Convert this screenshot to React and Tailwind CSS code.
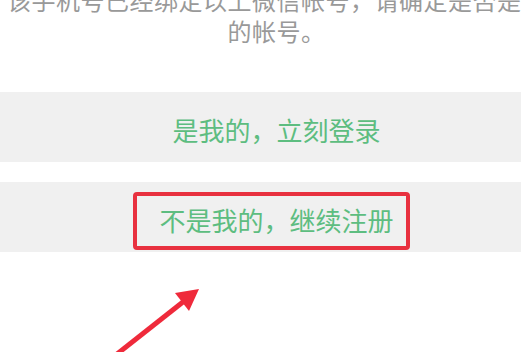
import React from "react";

const ActionButton = ({ label, highlighted }) => (
    <div className="relative h-[70px] w-full bg-[#f0f0f0] flex items-center justify-center pl-[32px] pt-[5px]">
        <span className="text-[26px] leading-none text-[#5dbd80] whitespace-nowrap">{label}</span>
        {highlighted && (
            <div className="absolute left-[133px] top-[10px] w-[277px] h-[58px] border-[4px] border-[#e8313f] rounded-[4px]" />
        )}
    </div>
);

export default function App() {
    return (
        <div
            className="relative w-[521px] h-[352px] overflow-hidden bg-white"
            style={{ fontFamily: '"Noto Sans CJK SC", "Noto Sans", sans-serif' }}
        >
            {/* Hint text, first line cut off at the top */}
            <div className="-mt-[16px] pl-[32px] text-[24px] leading-[31px] text-[#999999] tracking-[0.5px]">
                <div className="flex justify-center whitespace-nowrap">该手机号已经绑定以上微信帐号，请确定是否是你</div>
                <div className="flex justify-center whitespace-nowrap">的帐号。</div>
            </div>

            <div className="mt-[46px] flex flex-col gap-[20px]">
                <ActionButton label="是我的，立刻登录" />
                <ActionButton label="不是我的，继续注册" highlighted />
            </div>

            {/* Red annotation arrow */}
            <svg className="absolute left-0 top-0" width="521" height="352" viewBox="0 0 521 352">
                <line x1="112" y1="358" x2="188" y2="298" stroke="#ef2a3b" strokeWidth="5" />
                <polygon points="199,289 175,293 189,311" fill="#ef2a3b" />
            </svg>
        </div>
    );
}
